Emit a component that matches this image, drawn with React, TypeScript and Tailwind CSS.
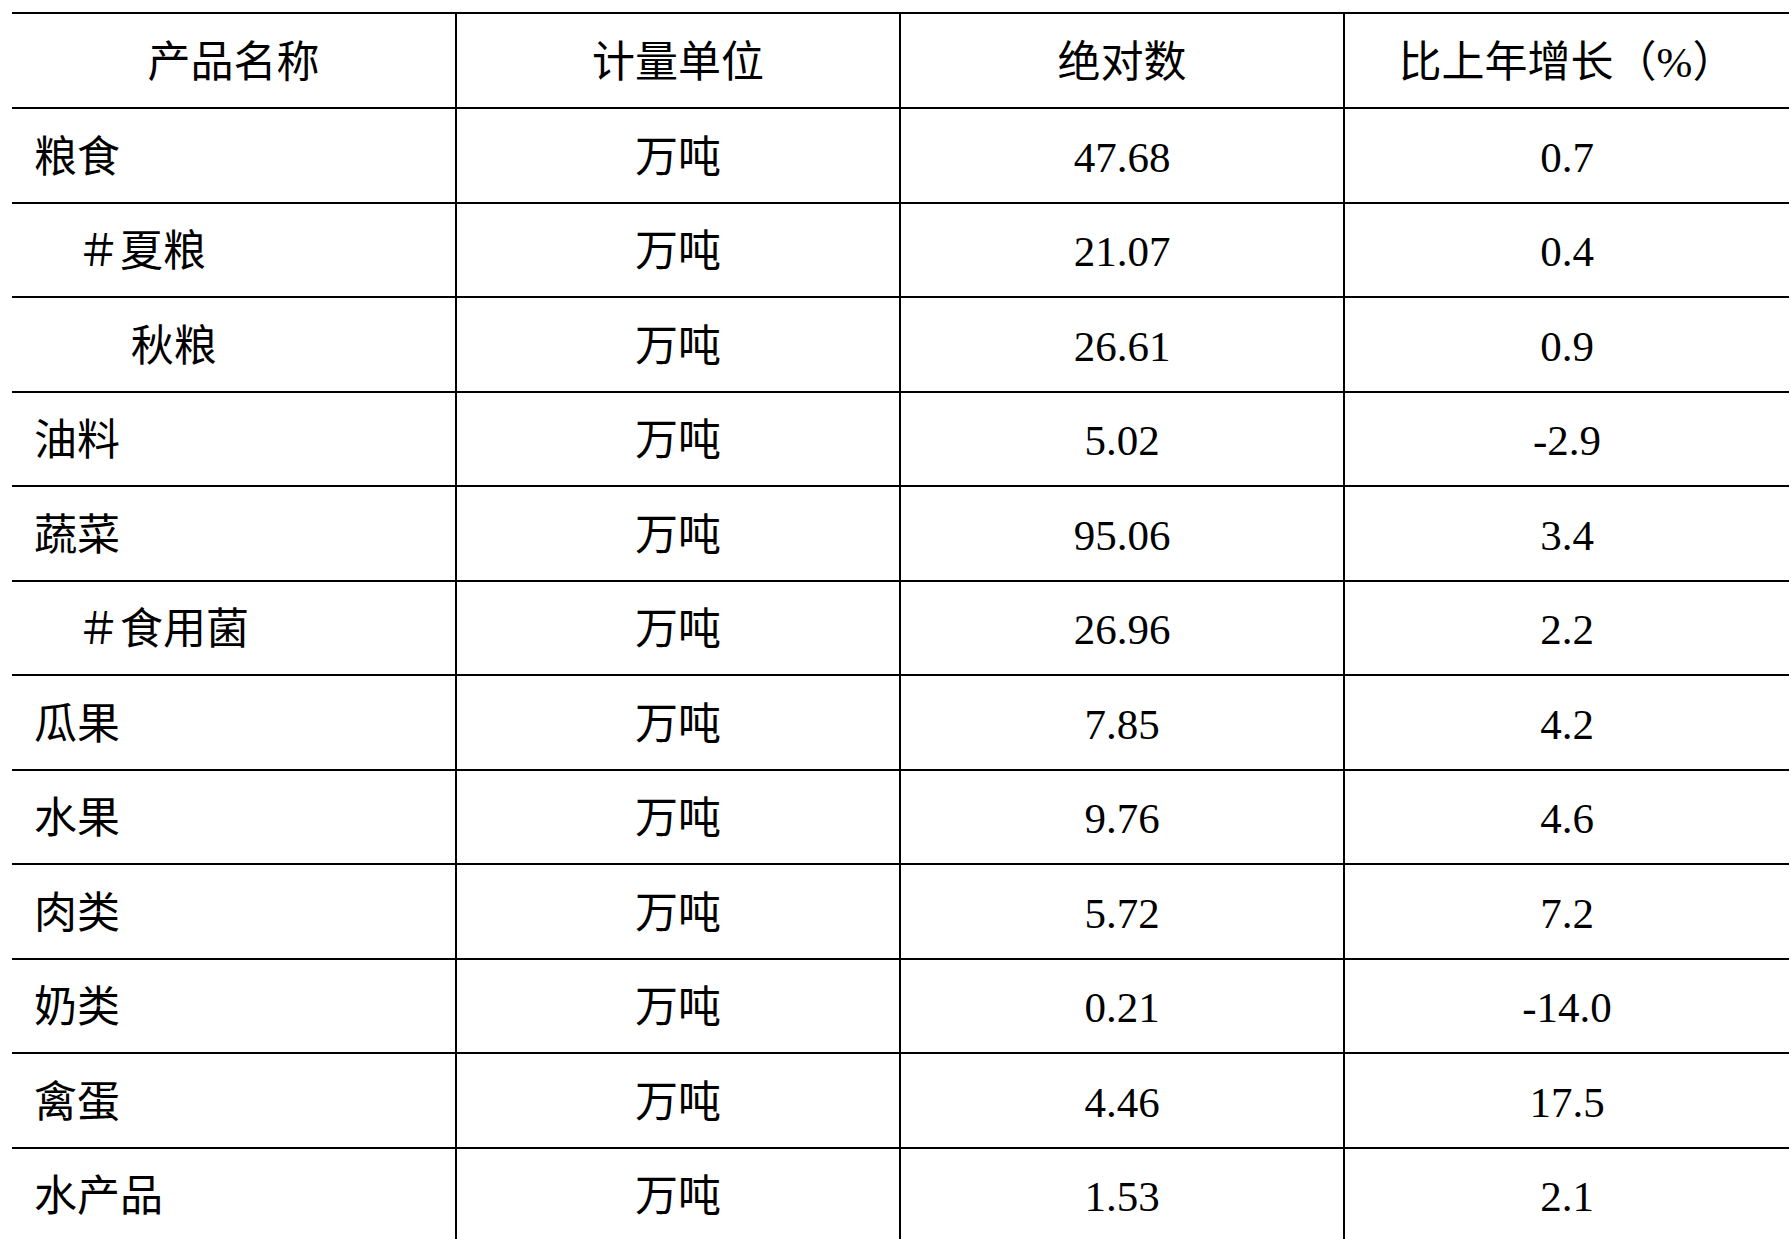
import React from 'react';

const rows: [string, string, string, string][] = [
  ['粮食', '万吨', '47.68', '0.7'],
  ['　＃夏粮', '万吨', '21.07', '0.4'],
  ['　　 秋粮', '万吨', '26.61', '0.9'],
  ['油料', '万吨', '5.02', '-2.9'],
  ['蔬菜', '万吨', '95.06', '3.4'],
  ['　＃食用菌', '万吨', '26.96', '2.2'],
  ['瓜果', '万吨', '7.85', '4.2'],
  ['水果', '万吨', '9.76', '4.6'],
  ['肉类', '万吨', '5.72', '7.2'],
  ['奶类', '万吨', '0.21', '-14.0'],
  ['禽蛋', '万吨', '4.46', '17.5'],
  ['水产品', '万吨', '1.53', '2.1'],
];

const cell = 'flex items-center pt-[3px] border-b-2 border-black';

export default function App() {
  return (
    <div
      className="min-h-screen bg-white pt-[12px] pl-[12px] text-black text-[43px] leading-none"
      style={{ fontFamily: '"Liberation Serif", "Noto Sans CJK SC", serif' }}
    >
      <div className="w-[1777px] border-t-2 border-black grid grid-cols-[445px_444px_444px_444px]">
        <div className={`${cell} h-[95px] justify-center border-r-2`}>产品名称</div>
        <div className={`${cell} h-[95px] justify-center border-r-2`}>计量单位</div>
        <div className={`${cell} h-[95px] justify-center border-r-2`}>绝对数</div>
        <div className={`${cell} h-[95px] justify-center`}>比上年增长（%）</div>
        {rows.map((r, i) => {
          const h = i % 2 === 0 ? 'h-[95px]' : 'h-[94px]';
          return (
            <React.Fragment key={i}>
              <div className={`${cell} ${h} pl-[22px] border-r-2 whitespace-pre`}>{r[0]}</div>
              <div className={`${cell} ${h} justify-center border-r-2`}>{r[1]}</div>
              <div className={`${cell} ${h} justify-center border-r-2`}>{r[2]}</div>
              <div className={`${cell} ${h} justify-center`}>{r[3]}</div>
            </React.Fragment>
          );
        })}
      </div>
    </div>
  );
}
